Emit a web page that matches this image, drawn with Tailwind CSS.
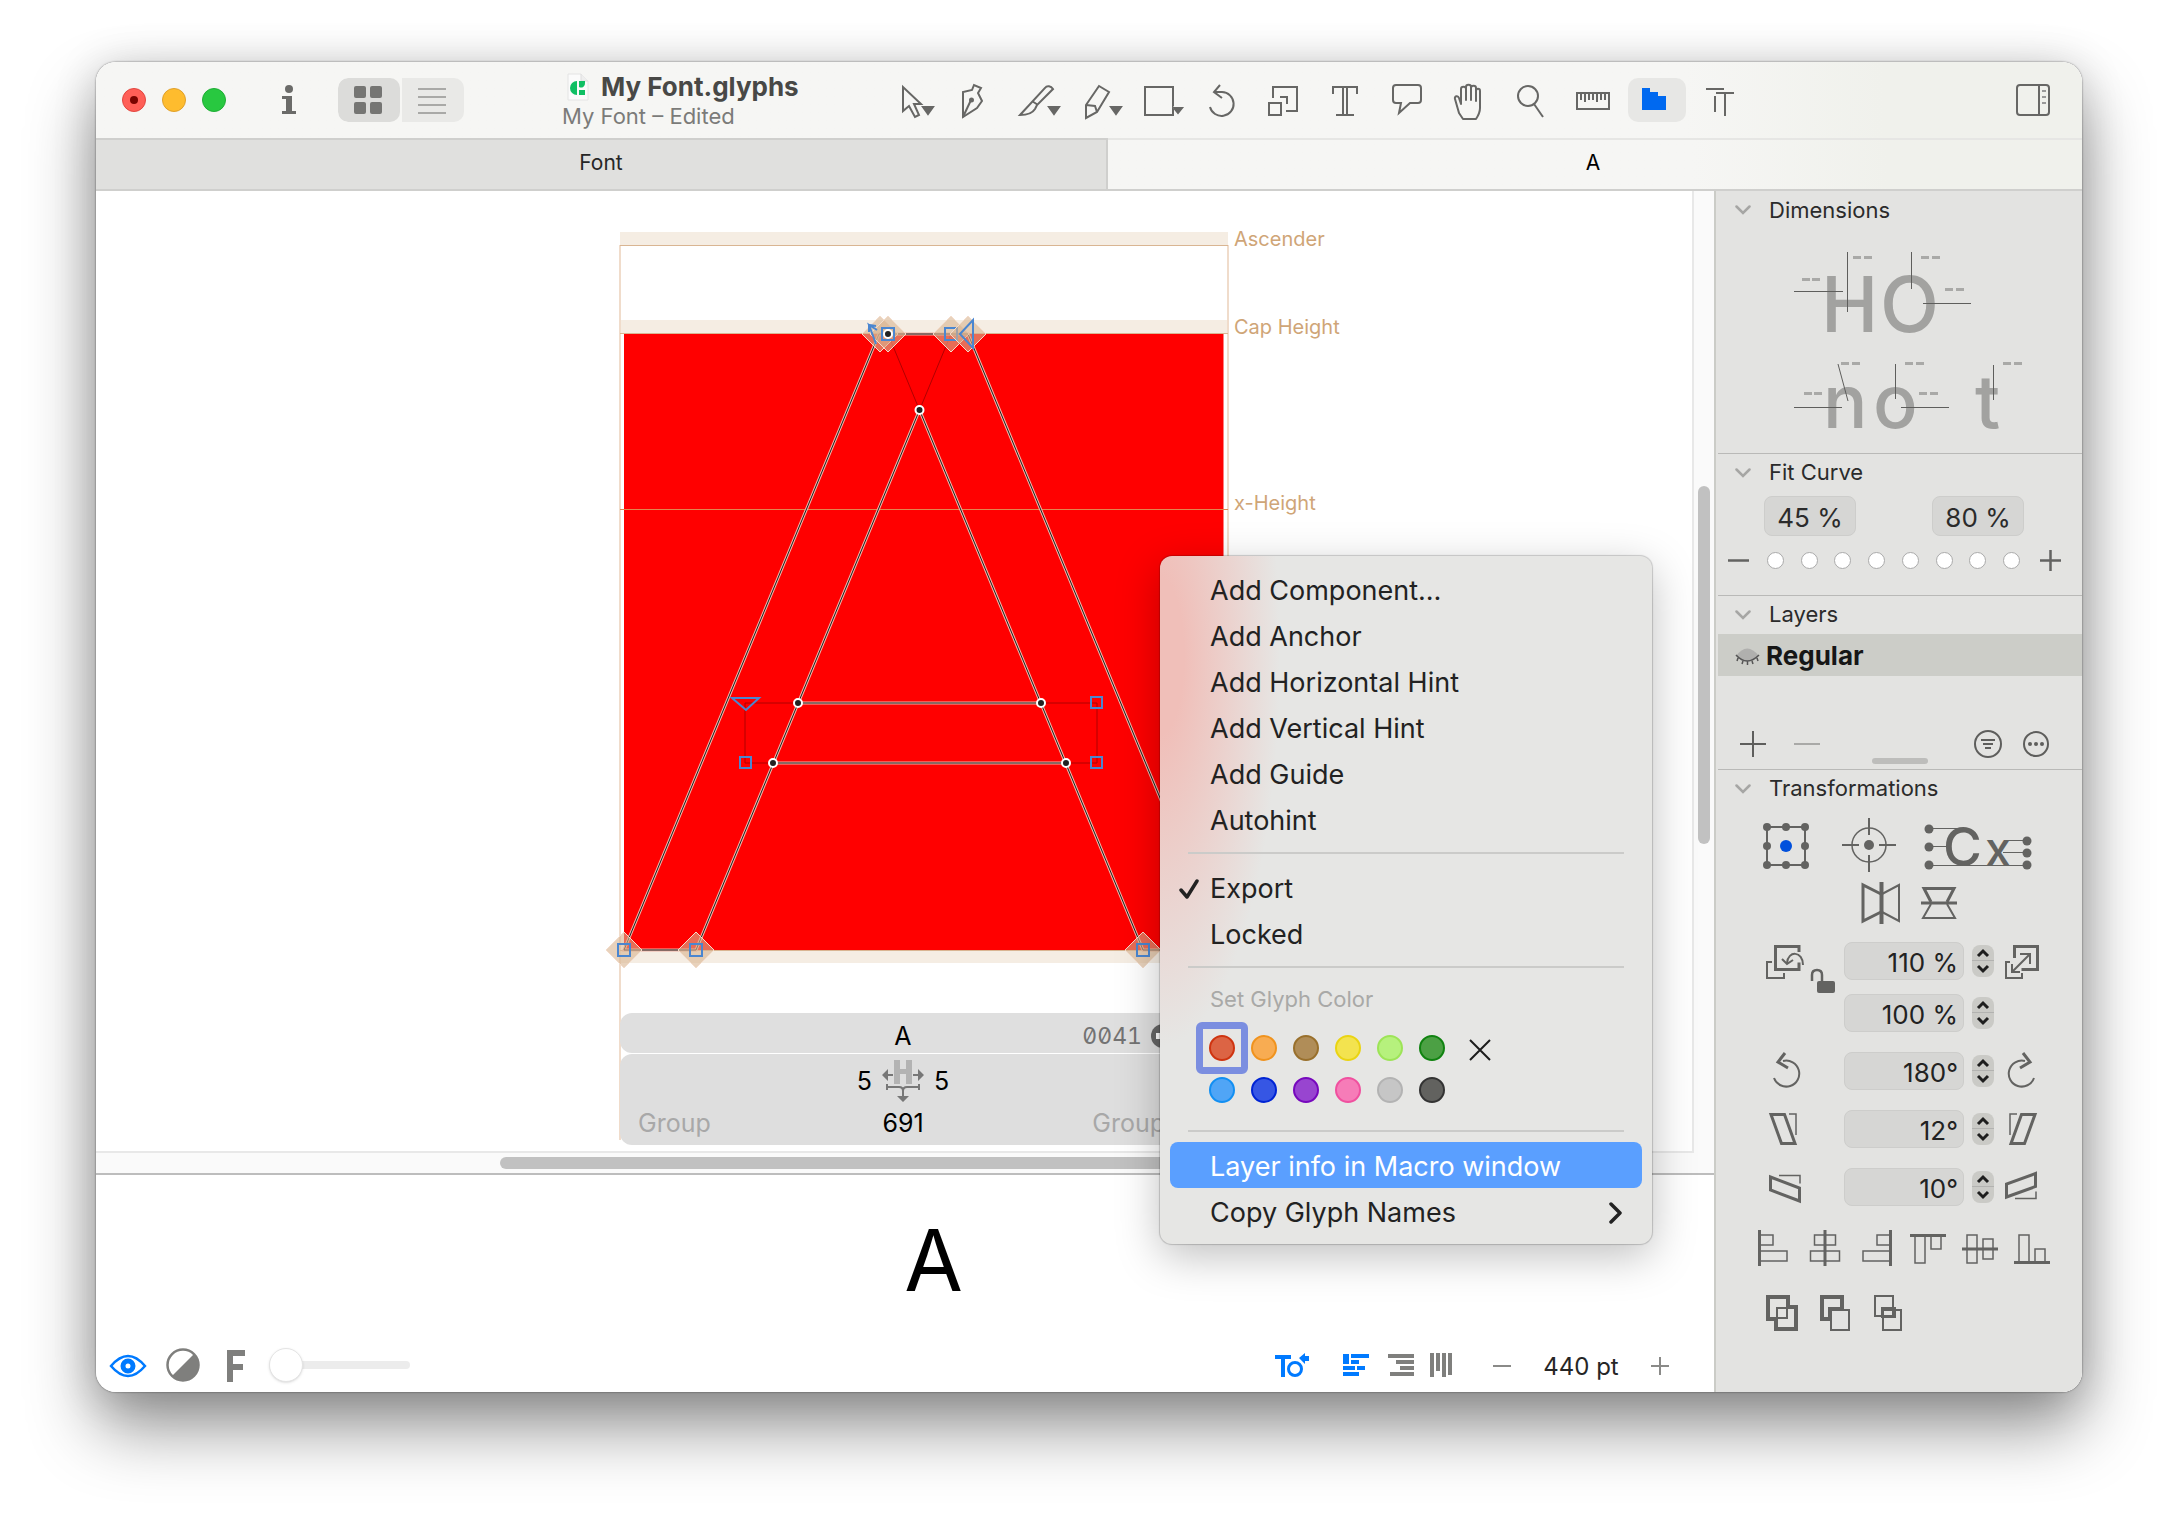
<!DOCTYPE html>
<html lang="en">
<head>
<meta charset="utf-8">
<title>My Font.glyphs</title>
<script src="https://cdn.jsdelivr.net/npm/@tailwindcss/browser@4"></script>
</head>
<body class="bg-white font-['Inter',sans-serif] text-[#262626]">
<div class="flex min-h-screen flex-col px-24 pt-[62px] pb-[134px]">
<div class="relative flex flex-1 flex-col rounded-[20px] shadow-[0_0_2px_rgba(0,0,0,0.6),0_36px_68px_rgba(0,0,0,0.42),0_4px_44px_rgba(0,0,0,0.16)]">
<div class="flex flex-1 flex-col overflow-hidden rounded-[20px] bg-white">

<header class="flex h-[76px] shrink-0 items-center bg-linear-to-r from-[#f6f6f4] from-80% to-[#f0f1ec] to-90% pl-[26px] pr-[26px]">
  <div class="flex gap-4">
    <button aria-label="Close" class="flex size-6 items-center justify-center rounded-full border border-[#e2463f] bg-[#ff5f57]"><span class="size-2 rounded-full bg-[#7a0400]"></span></button>
    <button aria-label="Minimize" class="size-6 rounded-full border border-[#e0a02a] bg-[#febc2e]"></button>
    <button aria-label="Zoom window" class="size-6 rounded-full border border-[#1fae35] bg-[#28c840]"></button>
  </div>
  <button aria-label="Info" class="ml-[43px] h-11 w-10"><svg width="40" height="44" viewBox="269 78 40 44" fill="#6b6b69"><circle cx="289" cy="89" r="4"/><path d="M282 96h10v15h4v3h-14v-3h4v-12h-4z"/></svg></button>
  <div class="ml-[29px] flex gap-[2px] overflow-hidden rounded-[10px]">
    <button aria-label="Grid view" class="h-11 w-[62px] rounded-[10px] bg-[#dcdcda]"><svg width="62" height="44" viewBox="338 78 62 44" fill="#757573"><rect x="354" y="86" width="12" height="12" rx="2"/><rect x="370" y="86" width="12" height="12" rx="2"/><rect x="354" y="102" width="12" height="12" rx="2"/><rect x="370" y="102" width="12" height="12" rx="2"/></svg></button>
    <button aria-label="List view" class="h-11 w-[62px] bg-[#e9e9e7]"><svg width="62" height="44" viewBox="402 78 62 44" stroke="#a9a9a7" stroke-width="2"><path d="M418 89h28M418 97h28M418 105h28M418 113h28"/></svg></button>
  </div>
  <div class="ml-[98px] w-[319px] pt-[2px]">
    <h1 class="flex items-center text-[26px]/[30px] font-bold text-[#484846]">
      <svg class="ml-[5px] mr-[12px]" width="22" height="28" viewBox="0 0 22 28"><path d="M1 1h13l7 7v19H1z" fill="#fbfbfb" stroke="#e4e4e4"/><path d="M14 1v7h7" fill="#eee" stroke="#ddd"/><path d="M10 8a6.500 6.500 0 0 0 0 14z" fill="#0fbf63"/><path d="M12 8h6v2a4 4 0 0 1-6 4zM12 22h6v-5h-6z" fill="#0fbf63"/></svg>My Font.glyphs</h1>
    <p class="text-[22px]/[28px] text-[#7b7b79]">My Font – Edited</p>
  </div>
  <nav aria-label="Tools" class="flex text-[#676765]">
    <button aria-label="Select" class="h-11 w-[62px]"><svg width="62" height="44" viewBox="881 78 62 44" fill="none" stroke="currentColor" stroke-width="2"><path d="M903 87v24l6-5 6 11 4-2-5-11h7z"/><path d="M923 107h10l-5 7z" fill="currentColor"/></svg></button>
    <button aria-label="Draw" class="h-11 w-[62px]"><svg width="62" height="44" viewBox="943 78 62 44" fill="none" stroke="currentColor" stroke-width="2"><path d="M963 117V92l9-2 2-5 7 3-3 5 4 8-5 7z"/><path d="M963 117l8-17"/><circle cx="971.500" cy="100" r="1.500" fill="currentColor"/></svg></button>
    <button aria-label="Knife" class="h-11 w-[62px]"><svg width="62" height="44" viewBox="1005 78 62 44" fill="none" stroke="currentColor" stroke-width="2"><path d="M1020 115l25-27c2-3 6-2 8 1l-16 16-2 4c-3 5-8 6-15 6zM1032 101l6 4"/><path d="M1049 107h10l-5 7z" fill="currentColor"/></svg></button>
    <button aria-label="Pencil" class="h-11 w-[62px]"><svg width="62" height="44" viewBox="1067 78 62 44" fill="none" stroke="currentColor" stroke-width="2"><path d="M1086 105l13-19 10 6-12 20-11 6zM1086 105l9 1 2 6"/><path d="M1111 107h10l-5 7z" fill="currentColor"/></svg></button>
    <button aria-label="Rectangle" class="h-11 w-[62px]"><svg width="62" height="44" viewBox="1129 78 62 44" fill="none" stroke="currentColor" stroke-width="2"><path d="M1145 87h28v28h-28z"/><path d="M1173 107h10l-5 7z" fill="currentColor" stroke="#f6f6f4" stroke-width="1"/><path d="M1174 108h8l-4 5z" fill="currentColor"/></svg></button>
    <button aria-label="Rotate" class="h-11 w-[62px]"><svg width="62" height="44" viewBox="1191 78 62 44" fill="none" stroke="currentColor" stroke-width="2"><path d="M1210 107a12 12 0 1 0 12-15h-8M1220 85l-6 7 8 6"/></svg></button>
    <button aria-label="Scale" class="h-11 w-[62px]"><svg width="62" height="44" viewBox="1253 78 62 44" fill="none" stroke="currentColor" stroke-width="2"><path d="M1273 98V87h24v24h-11M1269 103h12v12h-12zM1280 97h7v7"/></svg></button>
    <button aria-label="Text" class="h-11 w-[62px]"><svg width="62" height="44" viewBox="1315 78 62 44" fill="none" stroke="currentColor" stroke-width="2"><path d="M1333 94v-7h24v7M1343 87v28M1347 87v28M1336 115h18"/></svg></button>
    <button aria-label="Annotation" class="h-11 w-[62px]"><svg width="62" height="44" viewBox="1377 78 62 44" fill="none" stroke="currentColor" stroke-width="2"><path d="M1396 85h22q3 0 3 3v12q0 3-3 3h-8l-11 10 2-10h-5q-3 0-3-3V88q0-3 3-3z"/></svg></button>
    <button aria-label="Hand" class="h-11 w-[62px]"><svg width="62" height="44" viewBox="1439 78 62 44" fill="none" stroke="currentColor" stroke-width="2" stroke-linejoin="round"><path d="M1463 119l-4-6-4-14c-1-3 3-4 4-1l2 6V89c0-3 5-3 5 0v11-13c0-3 5-3 5 0v13-12c0-3 5-3 5 0v13-10c0-3 4-3 4 0v17c0 5-2 8-4 11z"/></svg></button>
    <button aria-label="Zoom" class="h-11 w-[62px]"><svg width="62" height="44" viewBox="1501 78 62 44" fill="none" stroke="currentColor" stroke-width="2"><circle cx="1528" cy="96" r="10"/><path d="M1534 104l9 13"/></svg></button>
    <button aria-label="Measure" class="h-11 w-[62px]"><svg width="62" height="44" viewBox="1563 78 62 44" fill="none" stroke="currentColor" stroke-width="2"><path d="M1577 93h32v16h-32zM1581 93v7M1585 93v9M1589 93v7M1593 93v7M1597 93v9M1601 93v7M1605 93v7"/></svg></button>
    <button aria-label="TrueType instructor" class="h-11 w-[62px]"><svg width="62" height="44" viewBox="1625 78 62 44"><rect x="1628" y="78" width="58" height="44" rx="10" fill="#e7e7e5"/><path d="M1642 88h8v4h8v4h8v14h-24z" fill="#0069f0"/></svg></button>
    <button aria-label="TrueType hinting" class="h-11 w-[62px]"><svg width="62" height="44" viewBox="1687 78 62 44" fill="none" stroke="currentColor" stroke-width="2"><path d="M1706 89h18M1716 93h18M1715 96v16M1725 93v23"/></svg></button>
  </nav>
  <button aria-label="Toggle sidebar" class="ml-auto h-11 w-[46px]"><svg width="46" height="44" viewBox="2010 78 46 44" fill="none" stroke="#676765" stroke-width="2"><rect x="2017" y="85" width="32" height="30" rx="3"/><path d="M2039 85v30"/><path d="M2042 91h4M2042 97h4M2042 103h4" stroke="#999" /></svg></button>
</header>

<nav aria-label="Tabs" class="grid h-[53px] shrink-0 grid-cols-[1012fr_974fr] border-b-2 border-[#cfcfcd] text-[21px]">
  <button class="border-t-2 border-r-2 border-[#cfcfcd] bg-[#e0e0de] pb-1">Font</button>
  <button class="border-t-2 border-[#e6e6e4] bg-linear-to-r from-[#f6f6f4] from-60% to-[#f0f1ec] to-80% pr-1 pb-1 text-black">A</button>
</nav>

<div class="flex flex-1">
<main class="flex min-w-0 flex-1 flex-col">
  <div class="grid flex-1 grid-cols-[1fr_20px] grid-rows-[1fr_20px] border-b-2 border-[#bdbdbd] bg-[#fafafa]">
    <div class="relative overflow-hidden border-r-2 border-b-2 border-[#e8e8e8] bg-white">
      <svg class="absolute inset-0 size-full" fill="none" font-family="Inter" font-size="20">
        <defs><path id="outline" d="M624 950L879 334H968L1223 950H1143L919.500 410 696 950zM798 703h243M773 763h293"/></defs>
        <g transform="translate(-96 -191)">
          <path d="M620 232h608v13H620zM620 320h608v13H620zM620 950h608v13H620z" fill="#f5ede3"/>
          <path d="M620 245v895M1228 245v895" stroke="#f0dccb" stroke-width="2"/>
          <path d="M624 334h599.500v616H624z" fill="#f00"/>
          <path d="M620 245.500h608M620 333.500h608M620 950.500h608" stroke="#d9b592"/>
          <path d="M620 509.500h608" stroke="#e2854f"/>
          <path d="M888 334l31.500 76L951 334M745 703h53M1041 703h56v60h-31M745 703v60h28M774 763l24-60M1041 703l25 60" stroke="#b00000"/>
          <use href="#outline" stroke="#f2b2a6" stroke-width="3"/>
          <use href="#outline" stroke="#1c2222" stroke-width="1"/>
          <g fill="#d9b48f" fill-opacity=".6" stroke="#f3dccb">
            <path d="M624 932l18 18-18 18-18-18zM696 932l18 18-18 18-18-18zM1143 932l18 18-18 18-18-18z"/>
            <path d="M880 316l18 18-18 18-18-18z"/><path d="M888 316l18 18-18 18-18-18z"/><path d="M951 316l18 18-18 18-18-18z"/>
            <path d="M945 328h12v12h-12z" fill="none" stroke="#4a86d0" stroke-width="2"/>
            <path d="M968 316l18 18-18 18-18-18z"/>
          </g>
          <path d="M618 944h12v12h-12zM690 944h12v12h-12zM1137 944h12v12h-12zM882 328h12v12h-12zM1091 697h11v11h-11zM1091 757h11v11h-11zM740 757h11v11h-11zM732 698h27l-13 12zM960 334l13-14v28zM876 344l-7-19 8 5M869 332v-7l7 1" stroke="#4a86d0" stroke-width="2"/>
          <g fill="#222" stroke="#fff" stroke-width="2"><circle cx="888" cy="334" r="4"/><circle cx="919.500" cy="410" r="4"/><circle cx="798" cy="703" r="4"/><circle cx="1041" cy="703" r="4"/><circle cx="773" cy="763" r="4"/><circle cx="1066" cy="763" r="4"/></g>
          <g fill="#cfa577"><text x="1234" y="246">Ascender</text><text x="1234" y="334">Cap Height</text><text x="1234" y="510">x-Height</text></g>
        </g>
      </svg>
      <div class="absolute top-[822px] left-[524px] flex w-[566px] flex-col text-[25px]/[30px] text-black">
        <div class="grid h-10 grid-cols-3 items-center rounded-xl bg-[#dfdfdf] pt-[5px]">
          <span class="col-start-2 text-center">A</span>
          <span class="flex items-center justify-end gap-[9px] pr-[11px] text-[23px] text-[#737373] tabular-nums slashed-zero">0041<svg width="24" height="24" viewBox="0 0 24 24"><circle cx="12" cy="12" r="12" fill="#666"/><path d="M5 9h7V5l7 7-7 7v-4H5z" fill="#fff"/></svg></span>
        </div>
        <div class="mt-px grid h-[91px] grid-cols-3 rounded-xl bg-[#dedede]">
          <div class="col-span-3 flex items-center justify-center gap-[8px]">
            <span>5</span>
            <svg width="46" height="46" viewBox="880 1061 46 46" fill="#777"><path d="M894 1063h6v9h6v-9h6v24h-6v-10h-6v10h-6z" fill="#b3b3b3"/><path d="M882 1078l6-6v5h5v2h-5v5zM924 1078l-6-6v5h-5v2h5v5zM903 1105l-6-6h5v-6h2v6h5z"/><path d="M887 1087v6M887 1090h12q4 0 4 4 0-4 4-4h12M919 1087v6" fill="none" stroke="#777" stroke-width="2"/></svg>
            <span>5</span>
          </div>
          <span class="pl-[18px] text-[#a8a8a8]">Group</span><span class="text-center">691</span><span class="pr-[21px] text-right text-[#a8a8a8]">Group</span>
        </div>
      </div>
    </div>
    <div class="pt-[295px] pl-1"><div class="h-[358px] w-3 rounded-full bg-[#c1c1c1]"></div></div>
    <div class="pt-1 pl-[404px]"><div class="h-3 w-[900px] rounded-full bg-[#c1c1c1]"></div></div>
  </div>

  <section aria-label="Preview" class="flex h-[217px] shrink-0 flex-col">
    <div class="flex-1 pt-[41px] pl-[57px] text-center text-[85px]/[90px] text-black">A</div>
    <div class="flex h-[54px] items-center pl-3 text-[#7f7f7d]">
      <button aria-label="Preview visibility" class="h-10 w-10"><svg width="40" height="40" viewBox="108 1345 40 40" fill="none" stroke="#007aff"><path d="M111 1366q17-20 34 0-17 20-34 0z" stroke-width="2.500"/><circle cx="128" cy="1366" r="5" stroke-width="5"/></svg></button>
      <button aria-label="Invert" class="ml-[15px] size-10"><svg width="40" height="40" viewBox="163 1345 40 40"><circle cx="183" cy="1365" r="15.500" fill="none" stroke="currentColor" stroke-width="2.500"/><path d="M194 1354a15.500 15.500 0 0 1-22 22z" fill="currentColor"/></svg></button>
      <button aria-label="Flip" class="ml-[13px] size-10"><svg width="40" height="40" viewBox="216 1346 40 40" fill="currentColor"><path d="M227 1351h18v6h-12v8h10v6h-10v12h-6z"/></svg></button>
      <input type="range" aria-label="Blur" min="0" max="100" value="0" class="ml-[13px] h-2 w-[141px] appearance-none rounded-full bg-[#ececec] [&::-webkit-slider-thumb]:size-[34px] [&::-webkit-slider-thumb]:appearance-none [&::-webkit-slider-thumb]:rounded-full [&::-webkit-slider-thumb]:border [&::-webkit-slider-thumb]:border-[#e4e4e4] [&::-webkit-slider-thumb]:bg-white [&::-webkit-slider-thumb]:shadow-sm">
      <div class="ml-auto flex items-center pr-[34px]">
        <button aria-label="Text direction mode" class="h-10 w-[52px]"><svg width="52" height="40" viewBox="1266 1345 52 40"><path d="M1275 1355h16v4h-6v18h-4v-18h-6z" fill="#007aff"/><circle cx="1295" cy="1369" r="6.500" fill="none" stroke="#007aff" stroke-width="3"/><path d="M1299 1358l6-5v3h4v5h-4v3z" fill="#007aff"/></svg></button>
        <button aria-label="Left to right" class="ml-4 h-10 w-11"><svg width="44" height="40" viewBox="1334 1345 44 40" fill="#007aff"><path d="M1343 1354h6v10h-6zM1351 1354h18v4h-18zM1351 1360h8v4h-8zM1343 1366h12v4h-12zM1357 1366h8v4h-8zM1343 1372h16v4h-16z"/></svg></button>
        <button aria-label="Right to left" class="h-10 w-11"><svg width="44" height="40" viewBox="1378 1345 44 40" fill="currentColor"><path d="M1388 1354h26v4h-26zM1396 1360h18v4h-18zM1400 1366h14v4h-14zM1390 1372h24v4h-24z"/></svg></button>
        <button aria-label="Vertical" class="h-10 w-11"><svg width="44" height="40" viewBox="1422 1345 44 40" fill="currentColor"><path d="M1430 1353h4v24h-4zM1436 1353h4v18h-4zM1442 1353h4v24h-4zM1448 1353h4v22h-4z"/></svg></button>
        <button aria-label="Smaller" class="ml-4 size-10"><svg width="40" height="40" viewBox="1482 1345 40 40" stroke="#8a8a88" stroke-width="2"><path d="M1493 1366h18"/></svg></button>
        <input aria-label="Size" value="440 pt" class="mt-1 w-[118px] bg-transparent text-center text-[24px] text-[#262626]">
        <button aria-label="Larger" class="size-10"><svg width="40" height="40" viewBox="1640 1345 40 40" stroke="#8a8a88" stroke-width="2"><path d="M1651 1366h18M1660 1357v18"/></svg></button>
      </div>
    </div>
  </section>
</main>

<aside class="w-[368px] shrink-0 border-l-2 border-[#cbccc7] bg-[#e3e3e1] text-[#2b2b2b]">
  <section class="flex h-[262px] flex-col">
    <h2 class="flex h-9 items-center gap-[18px] pt-[2px] pl-[19px] text-[22px]"><svg width="16" height="10" viewBox="0 0 16 10" fill="none" stroke="#a6a6a4" stroke-width="2.500" stroke-linecap="round"><path d="M1.500 1.500L8 8l6.500-6.500"/></svg>Dimensions</h2>
    <svg width="366" height="224" viewBox="1716 228 366 224" font-family="Inter" font-weight="500" fill="#a2a2a0">
      <text x="1821" y="333" font-size="77">H</text><text x="1880" y="333" font-size="77">O</text>
      <text x="1823" y="429" font-size="74">n</text><text x="1873" y="429" font-size="74">o</text><text x="1975" y="429" font-size="74">t</text>
      <path stroke="#a9a9a7" stroke-width="3" d="M1853 258.500h8M1864 258.500h8M1921 258.500h8M1932 258.500h8M1802 280.500h8M1812 280.500h8M1945 290.500h8M1956 290.500h8M1841 364.500h8M1852 364.500h8M1905 364.500h8M1916 364.500h8M2003 364.500h8M2014 364.500h8M1804 394.500h8M1814 394.500h8M1919 394.500h8M1930 394.500h8"/>
      <path stroke="#5e5e5c" stroke-width="1" fill="none" d="M1847.500 253v60M1911.500 253v37M1794 292.500h49M1923 304.500h48M1838 365l10 37M1895.500 365v35M1993.500 366v35M1794 408.500h48M1901 408.500h48"/>
    </svg>
  </section>

  <section class="ml-[2px] h-[142px] border-t border-[#b9b9b7]">
    <h2 class="flex h-9 items-center gap-[18px] pt-px pl-[17px] text-[22px]"><svg width="16" height="10" viewBox="0 0 16 10" fill="none" stroke="#a6a6a4" stroke-width="2.500" stroke-linecap="round"><path d="M1.500 1.500L8 8l6.500-6.500"/></svg>Fit Curve</h2>
    <div class="mt-[6px] flex gap-[76px] pl-[46px] text-[26px]">
      <input aria-label="Minimum curve" value="45 %" class="h-10 w-[92px] rounded-lg border border-[#cdcdcb] bg-[#d6d6d4] pt-[2px] text-center">
      <input aria-label="Maximum curve" value="80 %" class="h-10 w-[92px] rounded-lg border border-[#cdcdcb] bg-[#d6d6d4] pt-[2px] text-center">
    </div>
    <div class="flex h-12 items-center pl-[5px]">
      <button aria-label="Less" class="h-8 w-8"><svg width="32" height="32" viewBox="1723 543 32 32" stroke="#636361" stroke-width="2.500"><path d="M1728 559.500h21"/></svg></button>
      <div class="ml-3 flex w-[253px] justify-between">
        <button aria-label="Fit 1" class="size-[17px] rounded-full border border-[#aaa] bg-white"></button><button aria-label="Fit 2" class="size-[17px] rounded-full border border-[#aaa] bg-white"></button><button aria-label="Fit 3" class="size-[17px] rounded-full border border-[#aaa] bg-white"></button><button aria-label="Fit 4" class="size-[17px] rounded-full border border-[#aaa] bg-white"></button><button aria-label="Fit 5" class="size-[17px] rounded-full border border-[#aaa] bg-white"></button><button aria-label="Fit 6" class="size-[17px] rounded-full border border-[#aaa] bg-white"></button><button aria-label="Fit 7" class="size-[17px] rounded-full border border-[#aaa] bg-white"></button><button aria-label="Fit 8" class="size-[17px] rounded-full border border-[#aaa] bg-white"></button>
      </div>
      <button aria-label="More" class="ml-[14px] h-8 w-8"><svg width="32" height="32" viewBox="2034 543 32 32" stroke="#636361" stroke-width="2.500"><path d="M2040 559.500h21M2050.500 549v21"/></svg></button>
    </div>
  </section>

  <section class="ml-[2px] h-[174px] border-t border-[#b9b9b7]">
    <h2 class="flex h-9 items-center gap-[18px] pt-px pl-[17px] text-[22px]"><svg width="16" height="10" viewBox="0 0 16 10" fill="none" stroke="#a6a6a4" stroke-width="2.500" stroke-linecap="round"><path d="M1.500 1.500L8 8l6.500-6.500"/></svg>Layers</h2>
    <div class="mt-[2px] flex h-[42px] items-center bg-[#cccdc8] pl-[17px] text-[26px] font-bold text-[#161616]">
      <svg class="mr-[6px] mt-[4px]" width="25" height="20" viewBox="0 0 25 20"><path d="M1 9Q12-6 24 9 12 20 1 9z" fill="#b0b0ae"/><path d="M1 8q11 12 23 0M3 11l-1 3M8 14l-1 3M12.500 14v4M17 14l1 3M22 11l1 3" fill="none" stroke="#555" stroke-width="1.500"/></svg>Regular</div>
    <div class="mt-[54px] flex h-7 items-center pl-[11px]">
      <button aria-label="Add layer" class="h-7 w-12"><svg width="48" height="28" viewBox="1729 730 48 28" stroke="#5e5e5c" stroke-width="2"><path d="M1740 744h26M1753 731v26"/></svg></button>
      <button aria-label="Remove layer" class="h-7 w-12"><svg width="48" height="28" viewBox="1777 730 48 28" stroke="#a9a9a7" stroke-width="2"><path d="M1794 744h26"/></svg></button>
      <button aria-label="Filter layers" class="ml-[139px] h-7 w-12"><svg width="48" height="28" viewBox="1964 730 48 28" fill="none" stroke="#5e5e5c" stroke-width="2"><circle cx="1988" cy="744" r="13"/><path d="M1981 740h14M1983 744h10M1985 748h6"/></svg></button>
      <button aria-label="Layer options" class="h-7 w-12"><svg width="48" height="28" viewBox="2012 730 48 28" fill="#5e5e5c"><circle cx="2036" cy="744" r="12" fill="none" stroke="#5e5e5c" stroke-width="2"/><circle cx="2030" cy="744" r="2"/><circle cx="2036" cy="744" r="2"/><circle cx="2042" cy="744" r="2"/></svg></button>
    </div>
    <div class="mx-auto h-[6px] w-14 rounded-full bg-[#bdbdbb]"></div>
  </section>

  <section class="ml-[2px] border-t border-[#b9b9b7] text-[#636361]">
    <h2 class="flex h-9 items-center gap-[18px] pt-px pl-[17px] text-[22px] text-[#2b2b2b]"><svg width="16" height="10" viewBox="0 0 16 10" fill="none" stroke="#a6a6a4" stroke-width="2.500" stroke-linecap="round"><path d="M1.500 1.500L8 8l6.500-6.500"/></svg>Transformations</h2>
    <div class="flex h-[72px] pl-[38px]">
      <button aria-label="Transformation origin" class="w-[60px]"><svg width="60" height="72" viewBox="1756 806 60 72" fill="currentColor"><path d="M1767 827h38v38h-38z" fill="none" stroke="currentColor" stroke-width="2"/><circle cx="1767" cy="827" r="4"/><circle cx="1786" cy="827" r="4"/><circle cx="1805" cy="827" r="4"/><circle cx="1767" cy="846" r="4"/><circle cx="1805" cy="846" r="4"/><circle cx="1767" cy="865" r="4"/><circle cx="1786" cy="865" r="4"/><circle cx="1805" cy="865" r="4"/><circle cx="1786" cy="846" r="6" fill="#0050dc"/></svg></button>
      <button aria-label="Manual origin" class="ml-5 w-[66px]"><svg width="66" height="72" viewBox="1836 806 66 72" fill="none" stroke="currentColor" stroke-width="2"><circle cx="1869" cy="845" r="17" stroke-width="1.500"/><path d="M1842 845h17M1879 845h17M1869 818v17M1869 855v17"/><circle cx="1869" cy="845" r="5" fill="currentColor" stroke="none"/></svg></button>
      <button aria-label="Metric origin" class="ml-4 w-[118px]"><svg width="118" height="72" viewBox="1918 806 118 72" fill="currentColor" font-family="Inter" font-weight="500"><circle cx="1929" cy="829" r="4.500"/><circle cx="1929" cy="847" r="4.500"/><circle cx="1929" cy="865" r="4.500"/><circle cx="2027" cy="841" r="4.500"/><circle cx="2027" cy="853" r="4.500"/><circle cx="2027" cy="865" r="4.500"/><path d="M1929 828.500h36M1929 846.500h18M1929 865.500h98M2007 840.500h20M2003 852.500h24" stroke="currentColor"/><text x="1943" y="866" font-size="53">C</text><text x="1985" y="866" font-size="47">x</text></svg></button>
    </div>
    <div class="flex h-[50px] gap-[10px] pl-[139px]">
      <button aria-label="Flip horizontally" class="w-12"><svg width="48" height="50" viewBox="1857 878 48 50" fill="none" stroke="currentColor"><path d="M1881.500 882v42" stroke-width="4"/><path d="M1881 894l-18-9v36l18-9" stroke-width="3"/><path d="M1882 894l17-9v36l-17-9" stroke-width="2"/></svg></button>
      <button aria-label="Flip vertically" class="w-12"><svg width="48" height="50" viewBox="1915 878 48 50" fill="none" stroke="currentColor"><path d="M1921 903h36" stroke-width="3"/><path d="M1931 902l-7-13.500h30L1947 902" stroke-width="3"/><path d="M1931 904l-8 14h32l-8-14" stroke-width="2"/></svg></button>
    </div>

    <div class="relative mt-[14px] flex flex-col text-[26px] text-[#222]">
      <button aria-label="Lock proportions" class="absolute top-6 left-[91px] text-[#636361]"><svg width="28" height="28" viewBox="1809 966 28 28"><path d="M1812 981v-6q0-5 5-5t5 5v7" fill="none" stroke="currentColor" stroke-width="2.500"/><rect x="1817" y="981" width="18" height="12" rx="2" fill="currentColor"/></svg></button>
      <div class="flex h-[38px] items-center pl-[44px]">
        <button aria-label="Scale down" class="w-12 text-[#636361]"><svg width="48" height="38" viewBox="1762 942 48 38" fill="none" stroke="currentColor"><path d="M1799 952v-5.500h-23.500v23h23.500v-7" stroke-width="3"/><path d="M1772 962h-5v16h17v-5M1803 965c0-14-15-15-16-2" stroke-width="2"/><path d="M1782 959l5 5 6-4" stroke-width="2"/></svg></button>
        <input aria-label="Horizontal scale" value="110 %" class="ml-[34px] h-[38px] w-[120px] rounded-lg border border-[#cdcdcb] bg-[#d6d6d4] pt-[3px] pr-[5px] text-right">
        <div class="ml-2 flex h-8 w-[22px] flex-col overflow-hidden rounded-lg bg-[#cacac6]"><button aria-label="Increase" class="h-4 border-b border-[#b2b2b0]"><svg width="22" height="15" viewBox="0 0 22 15" fill="none" stroke="#1e1e1e" stroke-width="3"><path d="M6 11l5-5 5 5"/></svg></button><button aria-label="Decrease" class="h-4"><svg width="22" height="16" viewBox="0 0 22 16" fill="none" stroke="#1e1e1e" stroke-width="3"><path d="M6 5l5 5 5-5"/></svg></button></div>
        <button aria-label="Scale up" class="ml-[5px] w-12 text-[#636361]"><svg width="48" height="38" viewBox="1999 942 48 38" fill="none" stroke="currentColor"><path d="M2014.500 958v-11.500h23v23h-16" stroke-width="3"/><path d="M2010 962h-4v16h16v-5M2012 972l18-18M2020 954h10v10M2012 964v8h8" stroke-width="2"/></svg></button>
      </div>
      <div class="mt-[14px] flex h-[38px] items-center pl-[126px]">
        <input aria-label="Vertical scale" value="100 %" class="h-[38px] w-[120px] rounded-lg border border-[#cdcdcb] bg-[#d6d6d4] pt-[3px] pr-[5px] text-right">
        <div class="ml-2 flex h-8 w-[22px] flex-col overflow-hidden rounded-lg bg-[#cacac6]"><button aria-label="Increase" class="h-4 border-b border-[#b2b2b0]"><svg width="22" height="15" viewBox="0 0 22 15" fill="none" stroke="#1e1e1e" stroke-width="3"><path d="M6 11l5-5 5 5"/></svg></button><button aria-label="Decrease" class="h-4"><svg width="22" height="16" viewBox="0 0 22 16" fill="none" stroke="#1e1e1e" stroke-width="3"><path d="M6 5l5 5 5-5"/></svg></button></div>
      </div>
      <div class="mt-5 flex h-[38px] items-center pl-[44px]">
        <button aria-label="Rotate left" class="w-12 text-[#636361]"><svg width="48" height="38" viewBox="1762 1052 48 38" fill="none" stroke="currentColor"><path d="M1774 1078a13 13 0 1 0 9-17" stroke-width="2"/><path d="M1785 1053l-7 9 10 6" stroke-width="3"/></svg></button>
        <input aria-label="Rotation" value="180°" class="ml-[34px] h-[38px] w-[120px] rounded-lg border border-[#cdcdcb] bg-[#d6d6d4] pt-[3px] pr-[5px] text-right">
        <div class="ml-2 flex h-8 w-[22px] flex-col overflow-hidden rounded-lg bg-[#cacac6]"><button aria-label="Increase" class="h-4 border-b border-[#b2b2b0]"><svg width="22" height="15" viewBox="0 0 22 15" fill="none" stroke="#1e1e1e" stroke-width="3"><path d="M6 11l5-5 5 5"/></svg></button><button aria-label="Decrease" class="h-4"><svg width="22" height="16" viewBox="0 0 22 16" fill="none" stroke="#1e1e1e" stroke-width="3"><path d="M6 5l5 5 5-5"/></svg></button></div>
        <button aria-label="Rotate right" class="ml-[5px] w-12 text-[#636361]"><svg width="48" height="38" viewBox="1999 1052 48 38" fill="none" stroke="currentColor"><path d="M2034 1078a13 13 0 1 1-9-17" stroke-width="2"/><path d="M2023 1053l7 9-10 6" stroke-width="3"/></svg></button>
      </div>
      <div class="mt-5 flex h-[38px] items-center pl-[44px]">
        <button aria-label="Slant left" class="w-12 text-[#636361]"><svg width="48" height="38" viewBox="1762 1110 48 38" fill="none" stroke="currentColor"><path d="M1771 1114.500h13.500l10.500 29h-13.500z" stroke-width="3"/><path d="M1789 1114h7v21" stroke-width="1.500"/></svg></button>
        <input aria-label="Slant" value="12°" class="ml-[34px] h-[38px] w-[120px] rounded-lg border border-[#cdcdcb] bg-[#d6d6d4] pt-[3px] pr-[5px] text-right">
        <div class="ml-2 flex h-8 w-[22px] flex-col overflow-hidden rounded-lg bg-[#cacac6]"><button aria-label="Increase" class="h-4 border-b border-[#b2b2b0]"><svg width="22" height="15" viewBox="0 0 22 15" fill="none" stroke="#1e1e1e" stroke-width="3"><path d="M6 11l5-5 5 5"/></svg></button><button aria-label="Decrease" class="h-4"><svg width="22" height="16" viewBox="0 0 22 16" fill="none" stroke="#1e1e1e" stroke-width="3"><path d="M6 5l5 5 5-5"/></svg></button></div>
        <button aria-label="Slant right" class="ml-[5px] w-12 text-[#636361]"><svg width="48" height="38" viewBox="1999 1110 48 38" fill="none" stroke="currentColor"><path d="M2035 1114.500h-13.500l-10.500 29h13.500z" stroke-width="3"/><path d="M2017 1114h-7v21" stroke-width="1.500"/></svg></button>
      </div>
      <div class="mt-5 flex h-[38px] items-center pl-[44px]">
        <button aria-label="Skew down" class="w-12 text-[#636361]"><svg width="48" height="38" viewBox="1762 1168 48 38" fill="none" stroke="currentColor"><path d="M1770.500 1177v13l29 11v-13z" stroke-width="3"/><path d="M1779 1175.500h21v8" stroke-width="1.500"/></svg></button>
        <input aria-label="Skew" value="10°" class="ml-[34px] h-[38px] w-[120px] rounded-lg border border-[#cdcdcb] bg-[#d6d6d4] pt-[3px] pr-[5px] text-right">
        <div class="ml-2 flex h-8 w-[22px] flex-col overflow-hidden rounded-lg bg-[#cacac6]"><button aria-label="Increase" class="h-4 border-b border-[#b2b2b0]"><svg width="22" height="15" viewBox="0 0 22 15" fill="none" stroke="#1e1e1e" stroke-width="3"><path d="M6 11l5-5 5 5"/></svg></button><button aria-label="Decrease" class="h-4"><svg width="22" height="16" viewBox="0 0 22 16" fill="none" stroke="#1e1e1e" stroke-width="3"><path d="M6 5l5 5 5-5"/></svg></button></div>
        <button aria-label="Skew up" class="ml-[5px] w-12 text-[#636361]"><svg width="48" height="38" viewBox="1999 1168 48 38" fill="none" stroke="currentColor"><path d="M2006.500 1184v13l29-10.500v-13z" stroke-width="3"/><path d="M2015 1198.500h21v-7" stroke-width="1.500"/></svg></button>
      </div>
    </div>

    <div class="mt-6 flex h-9 pl-[29px]">
      <button aria-label="Align left" class="w-[52px]"><svg width="52" height="36" viewBox="1747 1230 52 36" fill="none" stroke="currentColor" stroke-width="1.500"><path d="M1759.500 1230v36" stroke-width="3"/><path d="M1761 1235h12v10h-12M1761 1251h26v10h-26"/></svg></button>
      <button aria-label="Align centre" class="w-[52px]"><svg width="52" height="36" viewBox="1799 1230 52 36" fill="none" stroke="currentColor" stroke-width="1.500"><path d="M1825 1230v36" stroke-width="3"/><path d="M1814.500 1235h21v10h-21zM1810.500 1251h29v10h-29z"/></svg></button>
      <button aria-label="Align right" class="w-[52px]"><svg width="52" height="36" viewBox="1851 1230 52 36" fill="none" stroke="currentColor" stroke-width="1.500"><path d="M1890.500 1230v36" stroke-width="3"/><path d="M1889 1235h-12v10h12M1889 1251h-26v10h26"/></svg></button>
      <button aria-label="Align top" class="w-[52px]"><svg width="52" height="36" viewBox="1903 1230 52 36" fill="none" stroke="currentColor" stroke-width="1.500"><path d="M1910 1235.500h36" stroke-width="3"/><path d="M1915 1237v26h10v-26M1931 1237v12h10v-12"/></svg></button>
      <button aria-label="Align middle" class="w-[52px]"><svg width="52" height="36" viewBox="1955 1230 52 36" fill="none" stroke="currentColor" stroke-width="1.500"><path d="M1962 1249h36" stroke-width="3"/><path d="M1967 1235h10v28h-10zM1983 1239h10v20h-10z"/></svg></button>
      <button aria-label="Align bottom" class="w-[52px]"><svg width="52" height="36" viewBox="2007 1230 52 36" fill="none" stroke="currentColor" stroke-width="1.500"><path d="M2014 1262.500h36" stroke-width="3"/><path d="M2019 1261v-26h10v26M2035 1261v-12h10v12"/></svg></button>
    </div>
    <div class="mt-[29px] flex h-9 pl-[37px]">
      <button aria-label="Union" class="w-[54px]"><svg width="54" height="36" viewBox="1755 1295 54 36" fill="none" stroke="currentColor"><path d="M1768 1297h20v10h8v22h-20v-10h-8z" stroke-width="4"/><path d="M1777 1319v-11h10v10h-11" stroke-width="2"/></svg></button>
      <button aria-label="Subtract" class="w-[54px]"><svg width="54" height="36" viewBox="1809 1295 54 36" fill="none" stroke="currentColor"><path d="M1832 1319h-10v-22h20v12h-12v10" stroke-width="4"/><path d="M1831 1310h18v20h-18z" stroke-width="2" fill="#e3e3e1"/></svg></button>
      <button aria-label="Intersect" class="w-[54px]"><svg width="54" height="36" viewBox="1863 1295 54 36" fill="none" stroke="currentColor"><path d="M1875 1296h18v20h-18zM1883 1310h18v20h-18z" stroke-width="2"/><path d="M1882.500 1308.500h12v8h-12z" stroke-width="3"/></svg></button>
    </div>
  </section>
</aside>
</div>
</div>

<div role="menu" class="absolute top-[494px] left-[1064px] flex w-[492px] flex-col rounded-xl bg-[#e6e6e4] bg-[radial-gradient(ellipse_120px_390px_at_0_100px,#f0bfb9_20%,transparent)] p-[10px] text-[27px] text-[#222] shadow-[0_0_1px_1px_rgba(0,0,0,0.18),0_12px_44px_rgba(0,0,0,0.25)]">
  <button role="menuitem" class="h-[46px] pt-1 pl-10 text-left">Add Component…</button>
  <button role="menuitem" class="h-[46px] pt-1 pl-10 text-left">Add Anchor</button>
  <button role="menuitem" class="h-[46px] pt-1 pl-10 text-left">Add Horizontal Hint</button>
  <button role="menuitem" class="h-[46px] pt-1 pl-10 text-left">Add Vertical Hint</button>
  <button role="menuitem" class="h-[46px] pt-1 pl-10 text-left">Add Guide</button>
  <button role="menuitem" class="h-[46px] pt-1 pl-10 text-left">Autohint</button>
  <hr class="mx-[18px] my-[10px] border-t-2 border-[#cbcbc9]">
  <button role="menuitemcheckbox" aria-checked="true" class="flex h-[46px] items-center pt-1 pl-[9px] text-left"><svg class="mr-[11px]" width="20" height="20" viewBox="0 0 20 20" fill="none" stroke="#222" stroke-width="3.500" stroke-linecap="round" stroke-linejoin="round"><path d="M2 11l6 7L18 2"/></svg>Export</button>
  <button role="menuitem" class="h-[46px] pt-1 pl-10 text-left">Locked</button>
  <hr class="mx-[18px] my-[10px] border-t-2 border-[#cbcbc9]">
  <div class="h-[142px] pl-[26px]">
    <p class="pt-[6px] pl-[14px] text-[22px]/[30px] text-[#a9a9a7]">Set Glyph Color</p>
    <div class="mt-2 grid w-fit grid-cols-[repeat(7,42px)] grid-rows-[52px_32px] items-center justify-items-center pl-[5px]">
      <button aria-label="Red" class="flex size-[52px] items-center justify-center rounded-[6px] border-[7px] border-[#7b8ee0]"><span class="size-[26px] rounded-full border-2 border-[#cf3410] bg-[#dc6444]"></span></button>
      <button aria-label="Orange" class="size-[26px] rounded-full border-2 border-[#f0931e] bg-[#f8ac52]"></button>
      <button aria-label="Brown" class="size-[26px] rounded-full border-2 border-[#99702c] bg-[#b08d58]"></button>
      <button aria-label="Yellow" class="size-[26px] rounded-full border-2 border-[#ead413] bg-[#f3e34f]"></button>
      <button aria-label="Light green" class="size-[26px] rounded-full border-2 border-[#9de457] bg-[#b6f17d]"></button>
      <button aria-label="Dark green" class="size-[26px] rounded-full border-2 border-[#108310] bg-[#4ca044]"></button>
      <button aria-label="No color" class="mt-[3px] ml-3"><svg width="22" height="22" viewBox="0 0 22 22" stroke="#1c1c1c" stroke-width="2"><path d="M1 1l20 20M21 1L1 21"/></svg></button>
      <button aria-label="Light blue" class="size-[26px] rounded-full border-2 border-[#128ff2] bg-[#50a5f6]"></button>
      <button aria-label="Dark blue" class="size-[26px] rounded-full border-2 border-[#0024d4] bg-[#3656e4]"></button>
      <button aria-label="Purple" class="size-[26px] rounded-full border-2 border-[#7708bd] bg-[#9845d0]"></button>
      <button aria-label="Magenta" class="size-[26px] rounded-full border-2 border-[#f0509f] bg-[#f67cb8]"></button>
      <button aria-label="Light gray" class="size-[26px] rounded-full border-2 border-[#b3b3b3] bg-[#c6c6c6]"></button>
      <button aria-label="Charcoal" class="size-[26px] rounded-full border-2 border-[#333] bg-[#62625f]"></button>
    </div>
  </div>
  <hr class="mx-[18px] my-[10px] border-t-2 border-[#cbcbc9]">
  <button role="menuitem" class="h-[46px] rounded-lg bg-[#5a9fff] pt-1 pl-10 text-left text-white">Layer info in Macro window</button>
  <button role="menuitem" aria-haspopup="true" class="flex h-[46px] items-center justify-between pt-1 pr-5 pl-10 text-left">Copy Glyph Names<svg width="14" height="22" viewBox="0 0 14 22" fill="none" stroke="#222" stroke-width="3.500" stroke-linecap="round" stroke-linejoin="round"><path d="M3 2l9 9-9 9"/></svg></button>
</div>
</div>
</div>
</body>
</html>
